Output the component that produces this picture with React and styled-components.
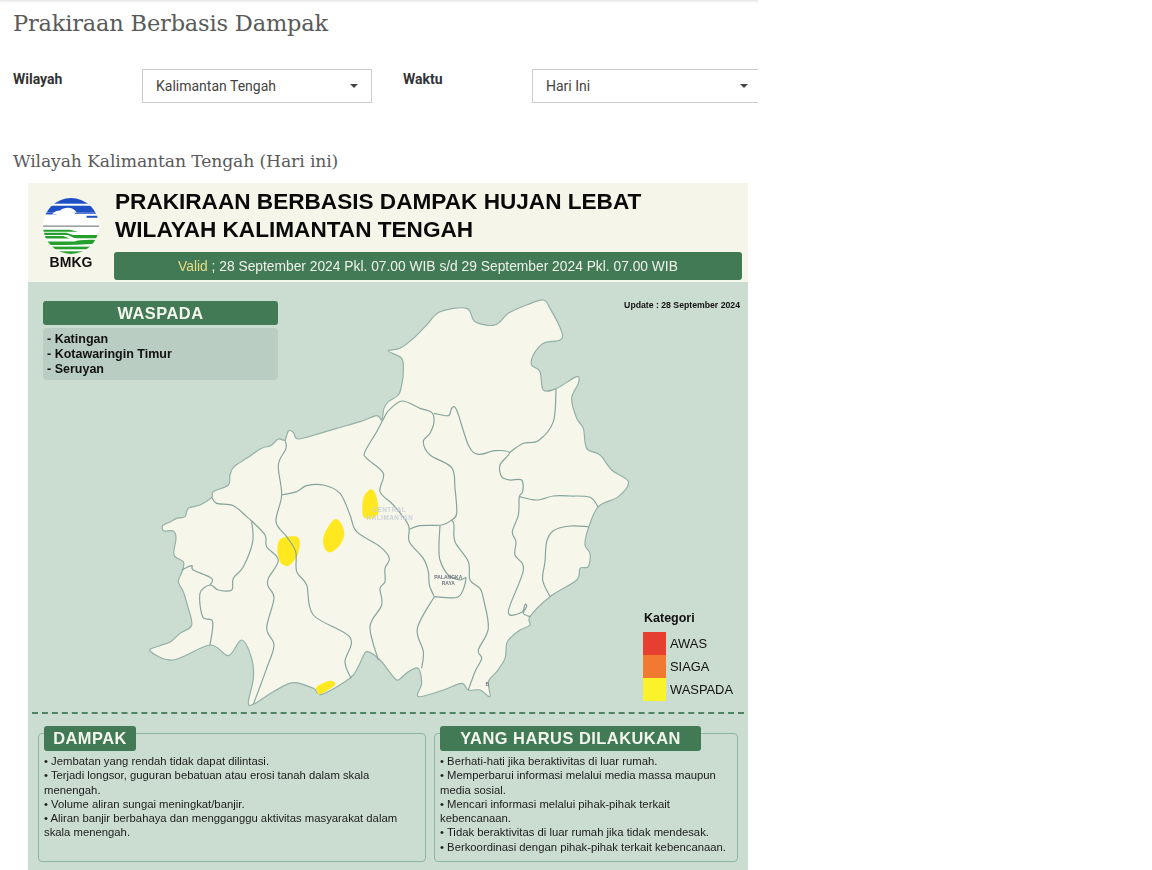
import React from 'react';
import styled, { createGlobalStyle } from 'styled-components';

const GlobalStyle = createGlobalStyle`
  html, body {
    margin: 0;
    padding: 0;
    background: #fff;
  }
  body {
    font-family: Roboto, "Liberation Sans", sans-serif;
    height: 870px;
    overflow: hidden;
  }
`;

const Page = styled.div`
  width: 758px;
  height: 870px;
  overflow: hidden;
  box-shadow: inset 0 3px 3px -2px rgba(0, 0, 0, 0.14);
`;

const PageTitle = styled.h1`
  margin: 0;
  padding: 8px 0 0 13px;
  height: 69px;
  box-sizing: border-box;
  font-family: "DejaVu Serif", serif;
  font-weight: 400;
  font-size: 22.5px;
  line-height: 30px;
  letter-spacing: -0.18px;
  color: #5a5a5a;
`;

const FilterRow = styled.div`
  display: flex;
  gap: 31px;
  padding-left: 13px;
  white-space: nowrap;
`;

const Filter = styled.div`
  display: flex;
  flex: none;
`;

const FilterLabel = styled.label`
  width: 129px;
  flex: none;
  padding-top: 2px;
  font-size: 14px;
  line-height: 16px;
  font-weight: 700;
  color: #333;
`;

const SelectBox = styled.div`
  width: 230px;
  height: 34px;
  box-sizing: border-box;
  border: 1px solid #ccc;
  display: flex;
  align-items: center;
  justify-content: space-between;
  padding: 0 13px;
  font-size: 14px;
  line-height: 30px;
  color: #444;
  background: #fff;
`;

const Caret = styled.span`
  width: 0;
  height: 0;
  border-left: 4px solid transparent;
  border-right: 4px solid transparent;
  border-top: 4px solid #444;
`;

const SubTitle = styled.h2`
  margin: 0;
  padding: 47px 0 0 13px;
  height: 80px;
  box-sizing: border-box;
  font-family: "DejaVu Serif", serif;
  font-weight: 400;
  font-size: 17.2px;
  line-height: 22px;
  letter-spacing: -0.12px;
  color: #5a5a5a;
`;

const Poster = styled.div`
  margin-left: 28px;
  width: 720px;
  background: #cbdcd0;
  font-family: "Liberation Sans", Arial, sans-serif;
  color: #111;
  filter: blur(0.3px);
`;

const PosterHeader = styled.div`
  height: 99px;
  box-sizing: border-box;
  background: #f5f6e9;
  display: flex;
  padding: 5px 6px 2px 15px;
  gap: 15px;
`;

const LogoColumn = styled.div`
  width: 56px;
  flex: none;
  padding-top: 10px;
  display: flex;
  flex-direction: column;
  align-items: center;
`;

const LogoText = styled.span`
  font-size: 14px;
  line-height: 16px;
  font-weight: 700;
`;

const HeaderMain = styled.div`
  flex: 1;
  min-width: 0;
`;

const PosterTitle = styled.div`
  padding: 0 0 0 1px;
  height: 64px;
  font-size: 22.6px;
  line-height: 28px;
  font-weight: 700;
  color: #0a0a0a;
  white-space: nowrap;
`;

const ValidBar = styled.div`
  height: 28px;
  border-radius: 3px;
  background: #437a56;
  color: #eef2ea;
  font-size: 13.8px;
  line-height: 29px;
  text-align: center;
`;

const ValidWord = styled.span`
  color: #e8dd84;
`;

const MapArea = styled.div`
  position: relative;
  height: 430px;
`;

const MapSvg = styled.svg`
  display: block;
  width: 720px;
  height: 430px;
`;

const AlertCard = styled.div`
  position: absolute;
  left: 15px;
  top: 19px;
  width: 235px;
`;

const AlertTitle = styled.div`
  height: 24px;
  border-radius: 3px;
  background: #437a56;
  color: #f3f6ee;
  font-size: 16.4px;
  font-weight: 700;
  line-height: 24px;
  letter-spacing: 0.5px;
  text-align: center;
`;

const AlertList = styled.div`
  margin-top: 3px;
  height: 52px;
  box-sizing: border-box;
  padding: 4px 4px;
  border-radius: 4px;
  background: #bacdc3;
  font-size: 12.5px;
  font-weight: 700;
  line-height: 15px;
`;

const UpdateNote = styled.div`
  position: absolute;
  right: 8px;
  top: 18px;
  font-size: 8.7px;
  line-height: 10px;
  font-weight: 700;
  color: #111;
`;

const Legend = styled.div`
  position: absolute;
  left: 615px;
  top: 329px;
`;

const LegendTitle = styled.div`
  font-size: 12.5px;
  line-height: 14px;
  font-weight: 700;
  margin: 0 0 7px 1px;
`;

const LegendRow = styled.div`
  display: flex;
  align-items: center;
  gap: 4px;
  height: 23px;
  line-height: 20px;
  font-size: 12.9px;
`;

const Swatch = styled.span`
  width: 23px;
  height: 23px;
  background: ${(props) => props.color};
`;

const Divider = styled.div`
  margin: 0 4px;
  border-top: 2px dashed #4f8465;
`;

const InfoRow = styled.div`
  display: grid;
  grid-template-columns: 388px 304px;
  gap: 8px;
  padding: 19px 10px 9px;
`;

const InfoPanel = styled.div`
  height: 129px;
  box-sizing: border-box;
  border: 1px solid #8db59d;
  border-radius: 4px;
  padding: 0 5px;
`;

const InfoBadge = styled.div`
  width: ${(props) => props.width}px;
  height: 25px;
  margin-top: -8px;
  box-sizing: border-box;
  border-radius: 3px;
  background: #437a56;
  color: #f3f6ee;
  font-size: 16.4px;
  line-height: 25px;
  font-weight: 700;
  letter-spacing: 0.5px;
  text-align: center;
`;

const InfoText = styled.div`
  margin-top: 3px;
  font-size: 11.3px;
  line-height: 14.3px;
  color: #1c1c1c;
`;

// outline and district lines, traced at 3x page coordinates
const coast = [
  [0, 1068], [30, 1052], [62, 1040], [90, 1015], [125, 990], [112, 930], [100, 890], [85, 860], [98, 825], [100, 800], [72, 780], [78, 730], [70, 708], [42, 708], [38, 692], [62, 680], [80, 670], [105, 665], [115, 640], [150, 630], [185, 607], [190, 590], [235, 570], [240, 540], [252, 515], [290, 490], [335, 460], [362, 452], [385, 432], [405, 435], [415, 408], [430, 412], [445, 432], [510, 415], [560, 400], [630, 380], [680, 362], [695, 375], [702, 340], [715, 320], [745, 300], [755, 270], [760, 230], [755, 190], [715, 168], [750, 160], [790, 130], [830, 90], [870, 50], [950, 40], [975, 80], [1035, 90], [1075, 55], [1130, 30], [1180, 15], [1200, 40], [1235, 110], [1230, 135], [1180, 145], [1150, 180], [1145, 210], [1170, 230], [1180, 285], [1220, 280], [1280, 245], [1285, 265], [1265, 310], [1280, 370], [1300, 400], [1310, 460], [1350, 480], [1385, 525], [1435, 560], [1405, 605], [1345, 635], [1315, 700], [1305, 750], [1320, 775], [1315, 815], [1290, 820], [1280, 855], [1200, 905], [1140, 965], [1140, 990], [1110, 1005], [1085, 1025], [1070, 1045], [1065, 1090], [1040, 1130], [1015, 1160], [1020, 1205], [990, 1185], [955, 1185], [935, 1165], [880, 1185], [805, 1205], [815, 1165], [805, 1120], [775, 1130], [745, 1155], [730, 1145], [690, 1095], [650, 1070], [625, 1115], [600, 1150], [515, 1198], [490, 1180], [430, 1163], [370, 1190], [310, 1228], [295, 1222], [310, 1150], [305, 1090], [275, 1035], [235, 1082], [180, 1050], [70, 1095],
];

const districts = [
  [[185, 607], [200, 625], [250, 632], [290, 665], [305, 678], [345, 720], [350, 755], [385, 795], [355, 850], [355, 875], [372, 910], [350, 1000], [372, 1050], [350, 1120], [310, 1228]],
  [[305, 678], [308, 740], [280, 815], [250, 850], [245, 885], [205, 885], [180, 870], [150, 895], [158, 965], [188, 980], [180, 1050]],
  [[180, 870], [185, 850], [130, 825], [125, 812], [95, 825]],
  [[405, 435], [408, 460], [385, 510], [395, 600], [378, 680], [410, 725], [437, 770], [440, 830], [470, 870], [490, 960], [600, 1027], [585, 1100], [603, 1150]],
  [[395, 600], [440, 590], [470, 572], [520, 570], [570, 595], [600, 660], [620, 710], [690, 755], [718, 790], [705, 820], [705, 860], [690, 880], [695, 930], [660, 995], [685, 1095]],
  [[712, 350], [680, 410], [645, 470], [650, 490], [700, 535], [690, 590], [730, 630], [775, 690], [778, 740], [820, 790], [835, 830], [838, 870], [853, 905]],
  [[712, 350], [755, 318], [810, 340], [845, 352], [852, 380], [840, 415], [820, 440], [840, 480], [905, 518], [915, 580], [920, 655], [905, 675], [875, 690], [810, 692], [778, 703]],
  [[852, 355], [895, 362], [905, 340], [920, 345], [955, 450], [985, 478], [1035, 467], [1078, 473], [1050, 510], [1055, 545], [1080, 555], [1115, 555], [1118, 590], [1108, 605], [1105, 660], [1087, 710], [1098, 740], [1095, 780], [1120, 825], [1075, 950], [1115, 952], [1125, 928], [1130, 935], [1120, 955], [1140, 965]],
  [[1078, 473], [1120, 445], [1165, 437], [1210, 380], [1218, 282]],
  [[1108, 605], [1160, 615], [1210, 603], [1260, 603], [1320, 607], [1345, 637]],
  [[1315, 695], [1260, 693], [1210, 707], [1190, 740], [1185, 800], [1178, 855], [1200, 905]],
  [[870, 692], [867, 750], [870, 795], [895, 840], [930, 855], [948, 850], [925, 905], [853, 905]],
  [[905, 675], [912, 690], [915, 740], [955, 800], [960, 855], [990, 880], [1000, 910], [1015, 1000], [985, 1065], [995, 1090], [975, 1130], [955, 1185]],
  [[853, 905], [802, 1000], [820, 1070], [815, 1120]],
];

const hazards = [
  [[640, 610], [662, 583], [678, 600], [685, 650], [670, 668], [640, 665]],
  [[522, 720], [550, 675], [570, 680], [583, 715], [570, 750], [540, 772], [522, 755]],
  [[382, 760], [395, 730], [445, 728], [445, 775], [425, 805], [410, 813], [390, 800]],
  [[500, 1175], [540, 1157], [555, 1170], [510, 1198], [502, 1190]],
];

// catmull-rom through the traced points, so the borders don't look like a polygon
const toPath = (pts, closed) => {
  const at = (i) => (closed ? pts[(i + pts.length) % pts.length] : pts[Math.max(0, Math.min(pts.length - 1, i))]);
  const last = closed ? pts.length : pts.length - 1;
  let d = `M${pts[0][0]} ${pts[0][1]}`;
  for (let i = 0; i < last; i++) {
    const [p0, p1, p2, p3] = [at(i - 1), at(i), at(i + 1), at(i + 2)];
    const c1x = p1[0] + (p2[0] - p0[0]) / 6;
    const c1y = p1[1] + (p2[1] - p0[1]) / 6;
    const c2x = p2[0] - (p3[0] - p1[0]) / 6;
    const c2y = p2[1] - (p3[1] - p1[1]) / 6;
    d += ` C${c1x.toFixed(1)} ${c1y.toFixed(1)} ${c2x.toFixed(1)} ${c2y.toFixed(1)} ${p2[0]} ${p2[1]}`;
  }
  return closed ? `${d} Z` : d;
};

const BmkgLogo = () => (
  <svg width="56" height="56" viewBox="45 55 167 167" aria-hidden="true">
    <defs>
      <clipPath id="bmkgDisc">
        <circle cx="128.5" cy="138.5" r="83.5" />
      </clipPath>
    </defs>
    <g clipPath="url(#bmkgDisc)">
      <rect x="45" y="55" width="167" height="167" fill="#fff" />
      <g fill="#1f4fc4">
        <rect x="45" y="55" width="167" height="17" />
        <rect x="45" y="78" width="167" height="20" />
        <rect x="45" y="98" width="40" height="6" />
        <rect x="140" y="98" width="72" height="4" />
        <rect x="175" y="108" width="37" height="6" />
      </g>
      <path d="M72 104 Q80 92 96 92 Q104 84 120 84 Q136 84 146 98 L72 104 Z" fill="#fff" />
      <rect x="45" y="137" width="167" height="4" fill="#8a8f8c" />
      <g fill="#25a02c">
        <path d="M45 150 H125 L150 156 H45 Z" />
        <path d="M45 159 H115 L135 165 H45 Z" />
        <path d="M45 168 H105 L125 176 H45 Z" />
        <path d="M120 165 H212 V175 H150 Q135 175 120 165 Z" />
        <path d="M45 185 H140 Q150 178 212 180 V190 Q170 196 45 195 Z" />
        <rect x="45" y="200" width="167" height="8" />
        <rect x="45" y="214" width="167" height="8" />
      </g>
    </g>
  </svg>
);

const ProvinceMap = () => (
  <MapSvg viewBox="-366 -39 2160 1290" aria-hidden="true">
    <path d={toPath(coast, true)} fill="#f6f6ea" stroke="#93b0a7" strokeWidth="3.5" />
    {hazards.map((shape, i) => (
      <path key={i} d={toPath(shape, true)} fill="#ffe81f" />
    ))}
    {districts.map((line, i) => (
      <path key={i} d={toPath(line, false)} fill="none" stroke="#84a39c" strokeWidth="3.5" />
    ))}
    <g fontFamily="'Liberation Sans', sans-serif" textAnchor="middle" fontWeight="700">
      <text x="718" y="650" fontSize="19" letterSpacing="1.5" fill="#cdd3d8">CENTRAL</text>
      <text x="720" y="674" fontSize="19" letterSpacing="1.5" fill="#cdd3d8">KALIMANTAN</text>
      <text x="895" y="851" fontSize="15" fill="#6f7682">PALANGKA</text>
      <text x="895" y="869" fontSize="15" fill="#6f7682">RAYA</text>
      <text x="1012" y="1172" fontSize="15" fill="#6f7682">B</text>
    </g>
  </MapSvg>
);

const legendItems = [
  { label: 'AWAS', color: '#e63f32' },
  { label: 'SIAGA', color: '#f07a30' },
  { label: 'WASPADA', color: '#fbf32a' },
];

export default function App() {
  return (
    <Page>
      <GlobalStyle />
      <PageTitle>Prakiraan Berbasis Dampak</PageTitle>
      <FilterRow>
        <Filter>
          <FilterLabel>Wilayah</FilterLabel>
          <SelectBox>Kalimantan Tengah<Caret /></SelectBox>
        </Filter>
        <Filter>
          <FilterLabel>Waktu</FilterLabel>
          <SelectBox>Hari Ini<Caret /></SelectBox>
        </Filter>
      </FilterRow>
      <SubTitle>Wilayah Kalimantan Tengah (Hari ini)</SubTitle>
      <Poster>
        <PosterHeader>
          <LogoColumn>
            <BmkgLogo />
            <LogoText>BMKG</LogoText>
          </LogoColumn>
          <HeaderMain>
            <PosterTitle>
              PRAKIRAAN BERBASIS DAMPAK HUJAN LEBAT<br />
              WILAYAH KALIMANTAN TENGAH
            </PosterTitle>
            <ValidBar>
              <ValidWord>Valid</ValidWord> ; 28 September 2024 Pkl. 07.00 WIB s/d 29 September 2024 Pkl. 07.00 WIB
            </ValidBar>
          </HeaderMain>
        </PosterHeader>
        <MapArea>
          <ProvinceMap />
          <AlertCard>
            <AlertTitle>WASPADA</AlertTitle>
            <AlertList>
              - Katingan<br />
              - Kotawaringin Timur<br />
              - Seruyan
            </AlertList>
          </AlertCard>
          <UpdateNote>Update : 28 September 2024</UpdateNote>
          <Legend>
            <LegendTitle>Kategori</LegendTitle>
            {legendItems.map((item) => (
              <LegendRow key={item.label}>
                <Swatch color={item.color} />
                {item.label}
              </LegendRow>
            ))}
          </Legend>
        </MapArea>
        <Divider />
        <InfoRow>
          <InfoPanel>
            <InfoBadge width={92}>DAMPAK</InfoBadge>
            <InfoText>
              • Jembatan yang rendah tidak dapat dilintasi.<br />
              • Terjadi longsor, guguran bebatuan atau erosi tanah dalam skala menengah.<br />
              • Volume aliran sungai meningkat/banjir.<br />
              • Aliran banjir berbahaya dan mengganggu aktivitas masyarakat dalam skala menengah.
            </InfoText>
          </InfoPanel>
          <InfoPanel>
            <InfoBadge width={261}>YANG HARUS DILAKUKAN</InfoBadge>
            <InfoText>
              • Berhati-hati jika beraktivitas di luar rumah.<br />
              • Memperbarui informasi melalui media massa maupun media sosial.<br />
              • Mencari informasi melalui pihak-pihak terkait kebencanaan.<br />
              • Tidak beraktivitas di luar rumah jika tidak mendesak.<br />
              • Berkoordinasi dengan pihak-pihak terkait kebencanaan.
            </InfoText>
          </InfoPanel>
        </InfoRow>
      </Poster>
    </Page>
  );
}
